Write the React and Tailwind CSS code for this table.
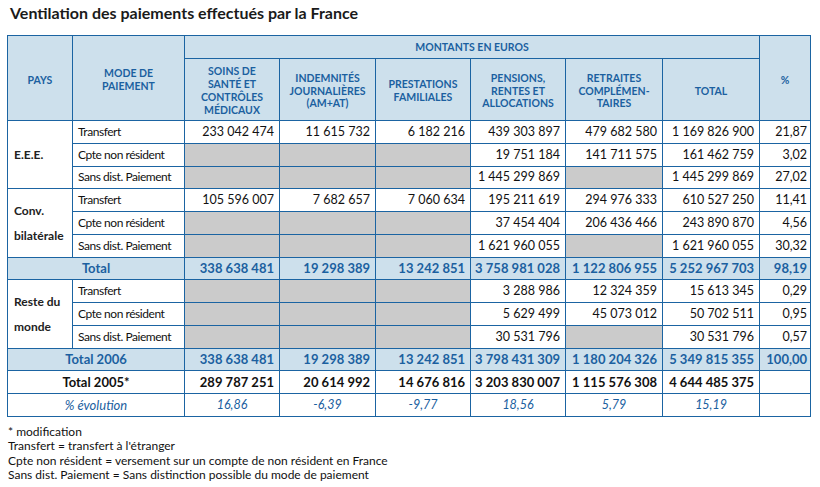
import React from 'react';

const B = 'border border-[#1b64a2]';
const GRAY = 'bg-[#cbcbcb]';

const groups = [
  {
    pays: ['E.E.E.'],
    rows: [
      ['Transfert', '233 042 474', '11 615 732', '6 182 216', '439 303 897', '479 682 580', '1 169 826 900', '21,87'],
      ['Cpte non résident', null, null, null, '19 751 184', '141 711 575', '161 462 759', '3,02'],
      ['Sans dist. Paiement', null, null, null, '1 445 299 869', null, '1 445 299 869', '27,02'],
    ],
  },
  {
    pays: ['Conv.', 'bilatérale'],
    rows: [
      ['Transfert', '105 596 007', '7 682 657', '7 060 634', '195 211 619', '294 976 333', '610 527 250', '11,41'],
      ['Cpte non résident', null, null, null, '37 454 404', '206 436 466', '243 890 870', '4,56'],
      ['Sans dist. Paiement', null, null, null, '1 621 960 055', null, '1 621 960 055', '30,32'],
    ],
  },
];

const total = ['338 638 481', '19 298 389', '13 242 851', '3 758 981 028', '1 122 806 955', '5 252 967 703', '98,19'];

const reste = {
  pays: ['Reste du', 'monde'],
  rows: [
    ['Transfert', null, null, null, '3 288 986', '12 324 359', '15 613 345', '0,29'],
    ['Cpte non résident', null, null, null, '5 629 499', '45 073 012', '50 702 511', '0,95'],
    ['Sans dist. Paiement', null, null, null, '30 531 796', null, '30 531 796', '0,57'],
  ],
};

const total2006 = ['338 638 481', '19 298 389', '13 242 851', '3 798 431 309', '1 180 204 326', '5 349 815 355', '100,00'];
const total2005 = ['289 787 251', '20 614 992', '14 676 816', '3 203 830 007', '1 115 576 308', '4 644 485 375', ''];
const evolution = ['16,86', '-6,39', '-9,77', '18,56', '5,79', '15,19', ''];

const Group = ({ group }) =>
  group.rows.map((row, i) => (
    <tr key={i} className="h-[22.75px]">
      {i === 0 && (
        <td rowSpan={3} className={`${B} pl-[6px] font-bold text-[#222] leading-[25px] text-[12px]`}>
          {group.pays.map((p) => (
            <div key={p}>{p}</div>
          ))}
        </td>
      )}
      <td className={`${B} pl-[5px] text-[12px] tracking-[-0.45px] text-[#111] whitespace-nowrap leading-[14px]`}>
        {row[0]}
      </td>
      {row.slice(1).map((v, j) =>
        v === null ? (
          <td key={j} className={`${B} ${GRAY}`} />
        ) : (
          <td
            key={j}
            className={`${B} text-right text-[12.5px] text-[#111] whitespace-nowrap leading-[14px] ${j === 6 ? 'pr-[3px]' : 'pr-[5px]'}`}
          >
            {v}
          </td>
        )
      )}
    </tr>
  ));

const TotalRow = ({ label, values, variant }) => {
  const bg =
    variant === 'blue'
      ? 'bg-[#cde0ec] text-[#1b60a0] font-bold'
      : variant === 'black'
      ? 'bg-white text-[#111] font-bold'
      : 'bg-white text-[#1b60a0] italic';
  return (
    <tr className={`h-[22.75px] ${bg}`}>
      <td colSpan={2} className={`${B} text-center text-[13px] leading-[14px] whitespace-nowrap`}>
        {label}
      </td>
      {values.map((v, j) => (
        <td
          key={j}
          className={`${B} leading-[14px] whitespace-nowrap ${
            variant === 'italic'
              ? 'text-center text-[12.5px]'
              : j === 6
              ? 'text-right pr-[3px] text-[13px]'
              : 'text-right pr-[5px] text-[13px]'
          }`}
        >
          {v}
        </td>
      ))}
    </tr>
  );
};

const App = () => {
  const head = `${B} bg-[#cde0ec] text-[#1b60a0] font-bold text-[10.5px] leading-[12.8px] text-center align-middle whitespace-nowrap`;
  return (
    <div
      className="w-[820px] h-[487px] overflow-hidden bg-white px-[7px] pt-[2px]"
      style={{ fontFamily: 'Lato, "Open Sans", sans-serif' }}
    >
      <h1 className="text-[16px] font-bold text-[#1a1a1a] pl-[3px] h-[33px] leading-[22px]">
        Ventilation des paiements effectués par la France
      </h1>
      <table className="border-collapse table-fixed w-[803px]">
        <colgroup>
          <col className="w-[65px]" />
          <col className="w-[112px]" />
          <col className="w-[95px]" />
          <col className="w-[96px]" />
          <col className="w-[95px]" />
          <col className="w-[95px]" />
          <col className="w-[97px]" />
          <col className="w-[97px]" />
          <col className="w-[51px]" />
        </colgroup>
        <thead>
          <tr className="h-[23px]">
            <th rowSpan={2} className={`${head} pt-[4px]`}>PAYS</th>
            <th rowSpan={2} className={`${head} pt-[4px]`}>
              MODE DE
              <br />
              PAIEMENT
            </th>
            <th colSpan={6} className={head}>MONTANTS EN EUROS</th>
            <th rowSpan={2} className={`${head} pt-[4px]`}>%</th>
          </tr>
          <tr className="h-[62px]">
            <th className={`${head} pt-[3px]`}>
              SOINS DE
              <br />
              SANTÉ ET
              <br />
              CONTRÔLES
              <br />
              MÉDICAUX
            </th>
            <th className={`${head} pt-[3px]`}>
              INDEMNITÉS
              <br />
              JOURNALIÈRES
              <br />
              (AM+AT)
            </th>
            <th className={`${head} pt-[3px]`}>
              PRESTATIONS
              <br />
              FAMILIALES
            </th>
            <th className={`${head} pt-[3px]`}>
              PENSIONS,
              <br />
              RENTES ET
              <br />
              ALLOCATIONS
            </th>
            <th className={`${head} pt-[3px]`}>
              RETRAITES
              <br />
              COMPLÉMEN-
              <br />
              TAIRES
            </th>
            <th className={`${head} pt-[3px]`}>TOTAL</th>
          </tr>
        </thead>
        <tbody>
          {groups.map((g, i) => (
            <Group key={i} group={g} />
          ))}
          <TotalRow label="Total" values={total} variant="blue" />
          <Group group={reste} />
          <TotalRow label="Total 2006" values={total2006} variant="blue" />
          <TotalRow label="Total 2005*" values={total2005} variant="black" />
          <TotalRow label="% évolution" values={evolution} variant="italic" />
        </tbody>
      </table>
      <div className="mt-[8px] pl-[1px] text-[12px] leading-[14.4px] text-[#111]">
        <div>* modification</div>
        <div>Transfert = transfert à l'étranger</div>
        <div>Cpte non résident = versement sur un compte de non résident en France</div>
        <div>Sans dist. Paiement = Sans distinction possible du mode de paiement</div>
      </div>
    </div>
  );
};

export default App;
